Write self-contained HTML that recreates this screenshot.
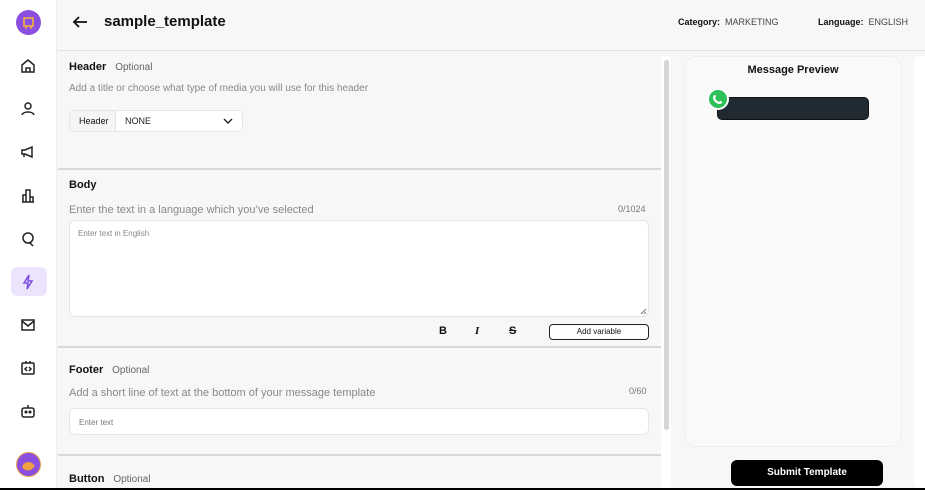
<!DOCTYPE html>
<html><head><meta charset="utf-8"><style>
*{box-sizing:border-box;margin:0;padding:0}
body{width:925px;height:490px;overflow:hidden;background:#f7f7f7;font-family:"Liberation Sans",sans-serif;color:#111;position:relative}
.a{position:absolute}
.side{left:0;top:0;width:57px;height:488px;background:#fff;border-right:1px solid #eee}
.ic{position:absolute;left:19px;width:18px;height:18px}
.t{font-size:12px;color:#777}
.h{font-size:12px;font-weight:bold;color:#111}
.sep{left:58px;width:603px;height:2px;background:#d8d8d8}
.box{background:#fff;border:1px solid #e6e6e6;border-radius:6px}
</style></head><body>
<div class="a side"></div>
<div class="a" style="left:16px;top:10px;width:25px;height:25px;border-radius:50%;background:#8a4fe0"><svg width="25" height="25"><rect x="8" y="8" width="9" height="8" fill="none" stroke="#f4b23a" stroke-width="1.6"/><path d="M10 16v3M15 16v3" stroke="#f4b23a" stroke-width="1.5"/></svg></div>
<svg class="ic" style="top:57px" viewBox="0 0 18 18" fill="none" stroke="#222" stroke-width="1.5"><path d="M3 8L9 3l6 5v7H3z M7 15v-4h4v4"/></svg>
<svg class="ic" style="top:100px" viewBox="0 0 18 18" fill="none" stroke="#222" stroke-width="1.5"><circle cx="9" cy="6" r="3"/><path d="M3 15c1-4 11-4 12 0"/></svg>
<svg class="ic" style="top:143px" viewBox="0 0 18 18" fill="none" stroke="#222" stroke-width="1.5"><path d="M3 7h3l7-3v10l-7-3H3z M5 11v3"/></svg>
<svg class="ic" style="top:187px" viewBox="0 0 18 18" fill="none" stroke="#222" stroke-width="1.5"><path d="M3 15h12 M4 15V8h3v7 M7 15V3h4v12 M11 15v-5h3v5"/></svg>
<svg class="ic" style="top:230px" viewBox="0 0 18 18" fill="none" stroke="#222" stroke-width="1.5"><circle cx="9" cy="8" r="5"/><path d="M11 13l3 3"/></svg>
<div class="a" style="left:11px;top:267px;width:36px;height:29px;border-radius:6px;background:#ece4fc"></div>
<svg class="ic" style="top:273px" viewBox="0 0 18 18" fill="none" stroke="#7c4ee4" stroke-width="1.5"><path d="M10 2L5 10h4l-1 6 5-8H9z"/></svg>
<svg class="ic" style="top:316px" viewBox="0 0 18 18" fill="none" stroke="#222" stroke-width="1.5"><rect x="3" y="4" width="12" height="10"/><path d="M3 5l6 5 6-5"/></svg>
<svg class="ic" style="top:359px" viewBox="0 0 18 18" fill="none" stroke="#222" stroke-width="1.5"><rect x="3" y="4" width="12" height="11" rx="1"/><path d="M7 2v2M11 2v2M8 8l-2 2 2 2M10 8l2 2-2 2"/></svg>
<svg class="ic" style="top:402px" viewBox="0 0 18 18" fill="none" stroke="#222" stroke-width="1.5"><rect x="3" y="6" width="12" height="9" rx="2"/><path d="M9 3v3"/><circle cx="7" cy="10" r=".8" fill="#222"/><circle cx="11" cy="10" r=".8" fill="#222"/></svg>
<div class="a" style="left:16px;top:452px;width:25px;height:25px;border-radius:50%;background:#8a4fe0;border:1px solid #e8a24a"><svg width="23" height="23"><path d="M5 14c2-5 6-6 10-4l3 3-4 4c-4 1-7 0-9-3z" fill="#f0a040"/></svg></div>

<svg class="a" style="left:71px;top:13px" width="18" height="18" viewBox="0 0 18 18" fill="none" stroke="#111" stroke-width="1.8"><path d="M16 9H3M8 4L3 9l5 5"/></svg>
<div class="a" style="left:104px;top:13px;font-size:15px;font-weight:bold">sample_template</div>
<div class="a" style="left:678px;top:17px;font-size:9px"><span style="font-weight:bold;color:#111">Category:</span>&nbsp; <span style="color:#444">MARKETING</span></div>
<div class="a" style="left:818px;top:17px;font-size:9px"><span style="font-weight:bold;color:#111">Language:</span>&nbsp; <span style="color:#444">ENGLISH</span></div>
<div class="a" style="left:58px;top:50px;width:867px;height:1px;background:#e2e2e2"></div>

<div class="a" style="left:69px;top:57px"><span class="h" style="font-size:11px">Header</span>&nbsp; <span class="t" style="font-size:10px;color:#666">Optional</span></div>
<div class="a t" style="left:69px;top:83px;font-size:10px;color:#888">Add a title or choose what type of media you will use for this header</div>
<div class="a box" style="left:69px;top:110px;width:174px;height:22px;border-radius:5px;overflow:hidden"><div class="a" style="left:0;top:0;width:46px;height:22px;background:#f5f5f5;border-right:1px solid #e6e6e6;font-size:9px;padding:5px 0 0 9px">Header</div><div class="a" style="left:55px;top:5px;font-size:9px;color:#222">NONE</div><svg class="a" style="left:153px;top:6px" width="10" height="8"><path d="M1 2l4 4 4-4" fill="none" stroke="#222" stroke-width="1.4"/></svg></div>
<div class="a sep" style="top:168px"></div>

<div class="a h" style="left:69px;top:179px;font-size:11px">Body</div>
<div class="a t" style="left:69px;top:204px;font-size:11px;color:#888">Enter the text in a language which you’ve selected</div>
<div class="a" style="left:618px;top:204px;font-size:9px;color:#777">0/1024</div>
<div class="a box" style="left:69px;top:220px;width:580px;height:97px"><div class="a" style="left:8px;top:8px;font-size:8px;color:#888">Enter text in English</div><svg class="a" style="right:2px;bottom:2px" width="6" height="6"><path d="M1 6L6 1M4 6l2-2" stroke="#777"/></svg></div>
<div class="a" style="left:439px;top:325px;font-size:11px;font-weight:bold">B</div>
<div class="a" style="left:475px;top:325px;font-size:11px;font-weight:bold;font-style:italic;font-family:'Liberation Serif',serif">I</div>
<div class="a" style="left:509px;top:325px;font-size:11px;font-weight:bold;text-decoration:line-through">S</div>
<div class="a" style="left:549px;top:324px;width:100px;height:16px;border:1px solid #222;border-radius:4px;background:#fff;font-size:8px;text-align:center;line-height:14px">Add variable</div>
<div class="a sep" style="top:346px"></div>

<div class="a" style="left:69px;top:360px"><span class="h" style="font-size:11px">Footer</span>&nbsp; <span class="t" style="font-size:10px;color:#666">Optional</span></div>
<div class="a t" style="left:69px;top:387px;font-size:11px;color:#888">Add a short line of text at the bottom of your message template</div>
<div class="a" style="left:629px;top:386px;font-size:9px;color:#777">0/60</div>
<div class="a box" style="left:69px;top:408px;width:580px;height:27px"><div class="a" style="left:9px;top:9px;font-size:8px;color:#777">Enter text</div></div>
<div class="a sep" style="top:454px"></div>
<div class="a" style="left:69px;top:469px"><span class="h" style="font-size:11px">Button</span>&nbsp; <span class="t" style="font-size:10px;color:#666">Optional</span></div>

<div class="a" style="left:661px;top:56px;width:10px;height:432px;background:#fff;border-radius:4px"></div>
<div class="a" style="left:664px;top:60px;width:5px;height:370px;background:#d6d6d6;border-radius:3px"></div>
<div class="a" style="left:684px;top:56px;width:218px;height:391px;background:#f9f9f9;border:1px solid #eee;border-radius:12px"></div>
<div class="a" style="left:684px;top:64px;width:218px;text-align:center;font-size:11px;font-weight:bold">Message Preview</div>
<div class="a" style="left:717px;top:97px;width:152px;height:23px;background:#1f2a33;border:1px solid #111;border-radius:5px"></div>
<div class="a" style="left:707px;top:88px;width:22px;height:22px;border-radius:50%;background:#2fc05a;border:2px solid #fff"><svg width="18" height="18" viewBox="0 0 18 18"><path d="M6 5c1 0 1 2 1 2l-1 1c1 2 2 3 4 4l1-1s2 0 2 1-1 2-2 2C7 14 4 11 4 7c0-1 1-2 2-2z" fill="#fff"/></svg></div>
<div class="a" style="left:731px;top:460px;width:152px;height:26px;background:#000;border-radius:6px;color:#fff;font-size:10px;font-weight:bold;text-align:center;line-height:26px">Submit Template</div>
<div class="a" style="left:914px;top:56px;width:11px;height:432px;background:#fff;border-radius:5px 0 0 5px"></div>
<div class="a" style="left:0;top:488px;width:925px;height:2px;background:#000"></div>
</body></html>
